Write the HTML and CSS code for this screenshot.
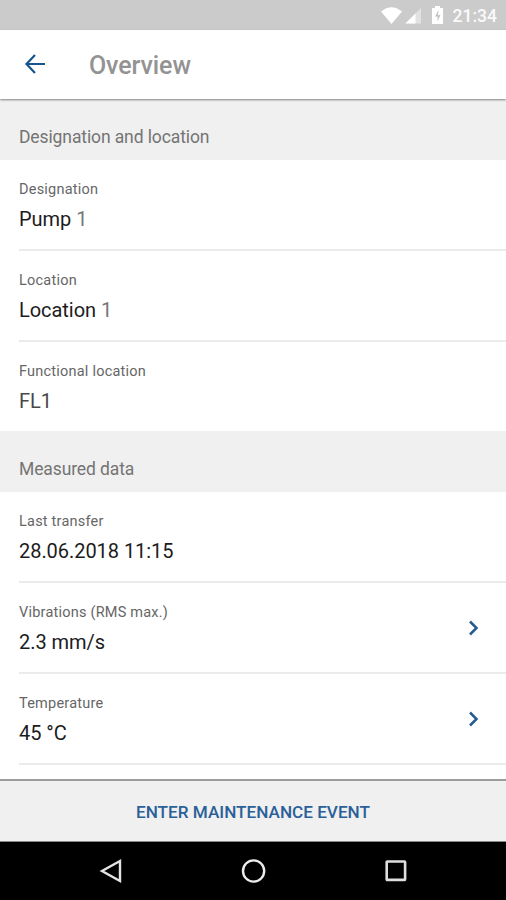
FILE: index.html
```html
<!DOCTYPE html>
<html lang="en">
<head>
<meta charset="utf-8">
<title>Overview</title>
<link rel="stylesheet" href="styles.css">
</head>
<body>
<div class="screen">
  <div class="status">
    <svg class="status-icons" width="68" height="30" viewBox="0 0 68 30">
      <path d="M1 11.5Q11.500 3 22 11.500L11.500 24Z" fill="#fff"/>
      <path d="M41 8V23.500H25.500Z" fill="#e2e2e2"/>
      <path d="M35.500 13.500V23.500H25.500Z" fill="#fff"/>
      <path d="M52 8H55V6H60V8H63V24H52Z" fill="#fff"/>
      <path d="M58.500 10L55 16.500H57.500V21.500L60.500 15H58Z" fill="#c4c4c4"/>
    </svg>
    <span class="clock">21:34</span>
  </div>
  <header class="appbar">
    <svg class="back" width="22" height="22" viewBox="0 0 22 22"><path d="M21 11H2.500M11 2L2.500 11L11 20" fill="none" stroke="#175590" stroke-width="2.200"/></svg>
    <h1 class="title">Overview</h1>
  </header>
  <main class="content">
    <h2 class="section">Designation and location</h2>
    <div class="row"><div><div class="label">Designation</div><div class="value">Pump <span class="soft">1</span></div></div></div>
    <div class="row"><div><div class="label">Location</div><div class="value">Location <span class="soft">1</span></div></div></div>
    <div class="row last"><div><div class="label">Functional location</div><div class="value fl">FL1</div></div></div>
    <h2 class="section">Measured data</h2>
    <div class="row"><div><div class="label">Last transfer</div><div class="value">28.06.2018 11:15</div></div></div>
    <div class="row"><div><div class="label">Vibrations (RMS max.)</div><div class="value">2.3 mm/s</div></div>
      <svg class="chevron" width="12" height="18" viewBox="0 0 12 18"><path d="M2 2.500L8.500 9L2 15.500" fill="none" stroke="#245b91" stroke-width="2.500"/></svg></div>
    <div class="row"><div><div class="label">Temperature</div><div class="value">45 °C</div></div>
      <svg class="chevron" width="12" height="18" viewBox="0 0 12 18"><path d="M2 2.500L8.500 9L2 15.500" fill="none" stroke="#245b91" stroke-width="2.500"/></svg></div>
  </main>
  <button class="action">ENTER MAINTENANCE EVENT</button>
  <nav class="nav">
    <svg width="24" height="26" viewBox="0 0 24 26"><path d="M21 3V23L3 13Z" fill="none" stroke="#e4e4e4" stroke-width="2.400"/></svg>
    <svg width="26" height="26" viewBox="0 0 26 26"><circle cx="12.600" cy="13" r="10.600" fill="none" stroke="#ececec" stroke-width="2.400"/></svg>
    <svg width="24" height="26" viewBox="0 0 24 26"><rect x="2.700" y="3.500" width="18.400" height="18.400" rx=".5" fill="none" stroke="#dedede" stroke-width="2.600"/></svg>
  </nav>
</div>
</body>
</html>
```

FILE: styles.css
```css
* {
  box-sizing: border-box;
}

body {
  margin: 0;
  background: #fff;
  font-family: Roboto, "Liberation Sans", sans-serif;
}

.screen {
  display: flex;
  flex-direction: column;
  width: 506px;
  height: 900px;
  overflow: hidden;
}

.status {
  flex: none;
  display: flex;
  align-items: center;
  justify-content: flex-end;
  height: 30px;
  padding-right: 9px;
  background: #cbcbcb;
}

.status-icons {
  margin-right: 5px;
}

.clock {
  color: #fafafa;
  font-size: 17.500px;
  font-weight: 500;
  line-height: 30px;
  padding-top: 2px;
}

.appbar {
  flex: none;
  display: flex;
  align-items: center;
  height: 69px;
  padding-left: 24px;
  background: #fff;
  box-shadow: 0 1px 2px rgba(0, 0, 0, .45);
  z-index: 1;
}

.back {
  margin-top: -1px;
}

.title {
  margin: 3px 0 0 43px;
  color: #939393;
  font-size: 25px;
  font-weight: 500;
  letter-spacing: -.1px;
  line-height: 30px;
}

.content {
  flex: none;
  height: 680px;
}

.section {
  height: 61px;
  margin: 0;
  padding: 27px 0 0 19px;
  background: #f0f0f0;
  color: #747474;
  font-size: 17.500px;
  font-weight: 400;
  letter-spacing: -.11px;
  line-height: 22px;
}

.row {
  display: flex;
  justify-content: space-between;
  height: 91px;
  margin-left: 19px;
  padding: 20px 26px 0 0;
  border-bottom: 2px solid #ebebeb;
}

.row.last {
  height: 89px;
  border-bottom: 0;
}

.label {
  color: #666;
  font-size: 14.500px;
  letter-spacing: .22px;
  line-height: 20px;
}

.value {
  margin-top: 7px;
  color: #1c1c1c;
  font-size: 20px;
  letter-spacing: -.05px;
  line-height: 24px;
}

.soft {
  color: #777;
}

.fl {
  color: #484848;
}

.chevron {
  margin-top: 16px;
}

.action {
  flex: none;
  height: 63px;
  margin: 0;
  padding: 2px 0 0;
  border: 0;
  border-top: 2px solid #9c9c9c;
  border-bottom: 1px solid #8a8a8a;
  background: #f0f0f0;
  color: #2a6098;
  font: 500 17.150px/24px Roboto, "Liberation Sans", sans-serif;
}

.nav {
  flex: none;
  display: flex;
  align-items: center;
  justify-content: space-between;
  height: 58px;
  padding: 0 98px 0 99px;
  background: #000;
}
```
